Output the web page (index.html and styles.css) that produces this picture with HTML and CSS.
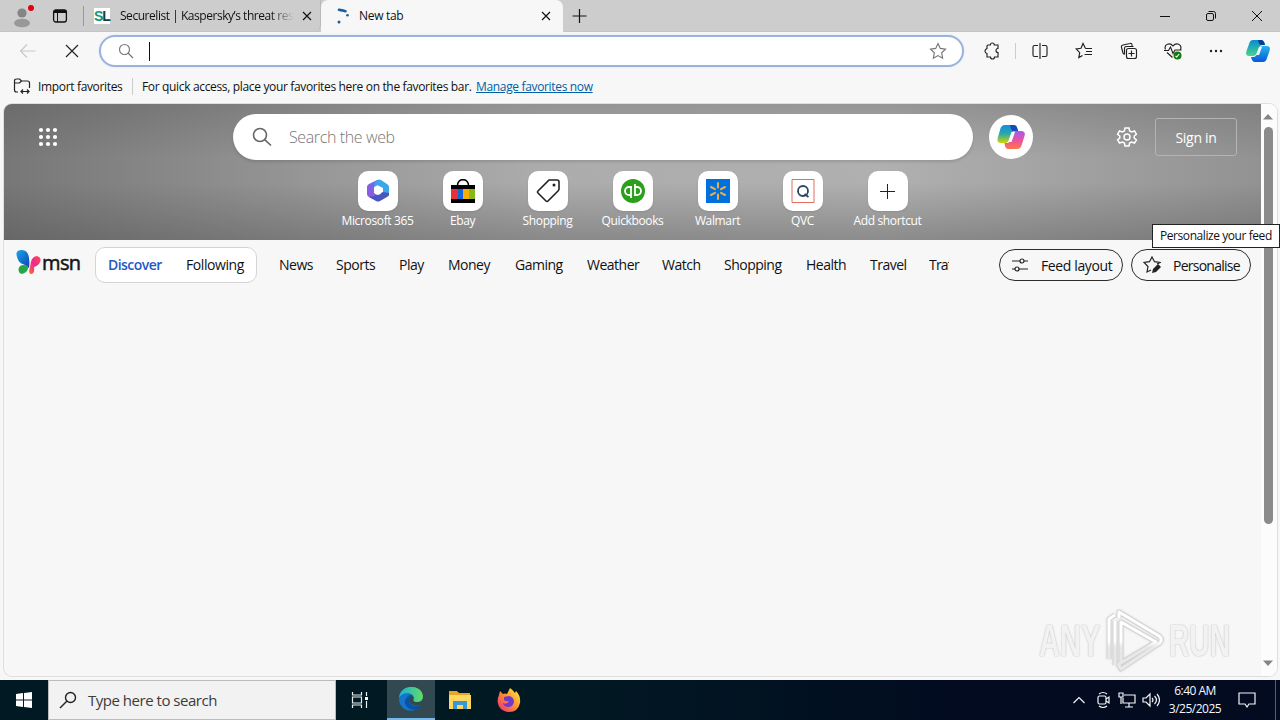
FILE: index.html
```html
<!DOCTYPE html>
<html lang="en">
<head>
<meta charset="utf-8">
<title>New tab</title>
<link rel="stylesheet" href="styles.css">
</head>
<body>
<div class="screen">
  <header class="tabstrip">
    <svg class="profile" width="24" height="26" viewBox="0 0 24 26"><circle cx="12" cy="10" r="4.6" fill="#858585"/><ellipse cx="12" cy="20" rx="8" ry="4.3" fill="#999"/><circle cx="21" cy="5" r="3" fill="#e3000f"/></svg>
    <svg class="workspace" width="16" height="16" viewBox="0 0 16 16"><rect x="1.6" y="2" width="12.8" height="12" rx="2.2" fill="none" stroke="#111" stroke-width="1.3"/><path d="M2 2.500h12v2H2zM5.500 5v9" stroke="#111" fill="#111"/></svg>
    <i class="strip-line"></i>
    <div class="tab">
      <span class="favicon"><b>S</b>L</span>
      <span class="tab-title faded">Securelist | Kaspersky’s threat research</span>
      <svg class="close" width="12" height="12" viewBox="0 0 12 12"><path d="M2 2l8 8M10 2l-8 8"/></svg>
    </div>
    <div class="tab active">
      <svg class="spinner" width="16" height="16" viewBox="0 0 16 16"><path d="M4 1.700L10.500 3.200" fill="none" stroke="#17609c" stroke-width="2.600" stroke-linecap="round" stroke-dasharray="3 1"/><circle cx="12.500" cy="7.200" r="1.300" fill="#17609c"/><circle cx="4" cy="14" r="1.500" fill="#17609c"/></svg>
      <span class="tab-title newtab">New tab</span>
      <svg class="close" width="12" height="12" viewBox="0 0 12 12"><path d="M2 2l8 8M10 2l-8 8"/></svg>
    </div>
    <svg class="plus" width="16" height="16" viewBox="0 0 16 16"><path d="M8.500 1v14M1.500 8h14"/></svg>
    <div class="window-controls">
      <svg width="12" height="12" viewBox="0 0 12 12"><path d="M1 6.500h10"/></svg>
      <svg width="12" height="12" viewBox="0 0 12 12"><rect x="1.500" y="3.500" width="7" height="7" rx="1.500"/><path d="M3.500 1.500h5q2 0 2 2v5"/></svg>
      <svg width="12" height="12" viewBox="0 0 12 12"><path d="M1 1l10 10M11 1L1 11"/></svg>
    </div>
  </header>

  <div class="toolbar">
    <svg class="back" width="18" height="16" viewBox="0 0 18 16"><path d="M16.500 8H2M8 1.500L1.500 8 8 14.500"/></svg>
    <svg class="stop" width="14" height="14" viewBox="0 0 14 14"><path d="M1 1l12 12M13 1L1 13"/></svg>
    <div class="address">
      <svg width="16" height="16" viewBox="0 0 16 16"><circle cx="6.500" cy="6.500" r="5"/><path d="M10 10l5 5"/></svg>
      <i class="caret"></i>
      <svg class="fav-star" width="18" height="18" viewBox="0 0 18 18"><path d="M9 1.500l2.300 4.900 5.200.7-3.800 3.700.9 5.400L9 13.600l-4.600 2.600.9-5.400L1.500 7.100l5.200-.7z"/></svg>
    </div>
    <div class="tools">
      <svg width="18" height="18" viewBox="0 0 18 18"><path d="M5 3h2.300a2 2 0 0 1 4 0H15v3.500a2 2 0 0 0 0 4V15h-3.500a2 2 0 0 1-4 0H4v-3.500a2.400 2.400 0 0 1-1-4.300l1-.7V4q0-1 1-1z"/></svg>
      <i class="tool-line"></i>
      <svg width="18" height="18" viewBox="0 0 18 18"><path d="M7 3.500H3.500Q2 3.500 2 5v8q0 1.500 1.500 1.500H7M11 3.500h3.500Q16 3.500 16 5v8q0 1.500-1.500 1.500H11M9 1v16"/></svg>
      <svg width="18" height="18" viewBox="0 0 18 18"><path d="M10.500 6.500L8 1.500 6 6.300l-4.800.7 3.500 3.600-.9 5L7.500 13.500M10.500 6.500H17M11 9.500h6M9.500 12.500H17"/></svg>
      <svg width="18" height="18" viewBox="0 0 18 18"><rect x="6.500" y="6.500" width="10" height="10" rx="2"/><path d="M11.500 8.500v6M8.500 11.500h6M12 4V3Q12 1 10 1.500L3 3Q1 3.500 1.500 5.500L3 11q.3 1 1.500 1.300M4.500 12.500V6.500q0-2 2-2h7"/></svg>
      <svg width="18" height="18" viewBox="0 0 18 18"><path d="M1.500 7.500C-.5 2 6 .2 9 4c3-3.800 9.500-2 7.500 3.500M0 8.500h4.500L6.500 5 9 11.500 11 8h6.500M3 10.500L8.500 15.500"/><circle cx="13.500" cy="13.500" r="4" fill="#107c10" stroke="none"/><path d="M11.500 14l1.200 1 2.500-3" stroke="#fff"/></svg>
      <svg width="18" height="18" viewBox="0 0 18 18"><g fill="#222" stroke="none"><circle cx="4" cy="9" r="1.200"/><circle cx="9" cy="9" r="1.200"/><circle cx="14" cy="9" r="1.200"/></g></svg>
      <svg class="copilot-bar" width="24" height="24" viewBox="0 0 24 24"><defs><linearGradient id="ca" x1="0" y1="0" x2="0" y2="1"><stop stop-color="#078bd6"/><stop offset="1" stop-color="#4cd48a"/></linearGradient><linearGradient id="cb" x1="0" y1="0" x2="0" y2="1"><stop stop-color="#24b5ed"/><stop offset="1" stop-color="#0758dc"/></linearGradient></defs><path d="M7 1h8q3 0 4 5h-3q-2 0-3 3l-2 5q-1 3-4 3H3q-4 0-2.500-5L3 5q1-4 4-4z" fill="url(#ca)"/><path d="M15 1q3 0 4 5h-4q-2 0-3-5z" fill="#073e91"/><path d="M17 23H9q-3 0-4-5h3q2 0 3-3l2-5q1-3 4-3h4q4 0 2.500 5L21 19q-1 4-4 4z" fill="url(#cb)"/><path d="M13 8h3l-3 8h-3z" fill="#eefaff"/></svg>
    </div>
  </div>

  <div class="favorites">
    <svg width="18" height="16" viewBox="0 0 18 16"><path d="M5 14H3.500Q1.500 14 1.500 12V3Q1.500 1 3.500 1h3l2 2h6q2 0 2 2v5M1.500 5h5l2-2M8 13.500h8M10 11.500l-2 2 2 2M14 11.500l2 2-2 2"/></svg>
    <span class="import">Import favorites</span>
    <i class="fav-line"></i>
    <span class="hint">For quick access, place your favorites here on the favorites bar.</span>
    <a class="manage">Manage favorites now</a>
  </div>

  <main class="page">
    <div class="page-body">
      <section class="hero">
        <div class="hero-top">
          <svg class="waffle" width="20" height="20" viewBox="0 0 20 20"><g fill="#fff"><circle cx="3" cy="3" r="2.100"/><circle cx="10" cy="3" r="2.100"/><circle cx="17" cy="3" r="2.100"/><circle cx="3" cy="10" r="2.100"/><circle cx="10" cy="10" r="2.100"/><circle cx="17" cy="10" r="2.100"/><circle cx="3" cy="17" r="2.100"/><circle cx="10" cy="17" r="2.100"/><circle cx="17" cy="17" r="2.100"/></g></svg>
          <div class="search">
            <svg width="20" height="20" viewBox="0 0 20 20"><circle cx="8" cy="8" r="6.500"/><path d="M12.700 12.700L19 18.500"/></svg>
            <span>Search the web</span>
          </div>
          <div class="copilot">
            <svg width="28" height="26" viewBox="0 0 28 26"><defs><linearGradient id="cc" x1="0" y1="0" x2="0" y2="1"><stop stop-color="#178be4"/><stop offset=".5" stop-color="#29aaa5"/><stop offset="1" stop-color="#d6d500"/></linearGradient><linearGradient id="cd" x1="0" y1="0" x2="0" y2="1"><stop stop-color="#a45aef"/><stop offset=".55" stop-color="#ec5498"/><stop offset="1" stop-color="#ff7846"/></linearGradient></defs><path d="M8 1h9q3 0 4 6h-3q-3 0-4 4l-1.500 4q-1 4-4.500 4H4q-5 0-3-6l2-7q1-5 5-5z" fill="url(#cc)"/><path d="M17 1q3 0 4 6h-5q-2 0-3-6z" fill="#174bb5"/><path d="M20 25h-9q-3 0-3.500-6h3q2 0 3-4l1.500-4q1-4 4-4h5q5 0 3.500 5l-2.500 8q-1 5-5 5z" fill="url(#cd)"/><path d="M14.500 8H18l-3.500 10H11z" fill="#fff"/></svg>
          </div>
          <svg class="gear" width="22" height="22" viewBox="0 0 22 22"><path d="M9 2h4l.6 3 2 1 2.900-1 1.900 3.300L18.200 10v2l2.200 1.800-1.900 3.200-2.900-1-2 1.100-.6 2.900H9l-.6-2.900-2-1.100-2.900 1-1.900-3.200L3.800 12v-2L1.600 8.300 3.500 5l2.900 1 2-1z"/><circle cx="11" cy="11" r="3"/></svg>
          <div class="signin">Sign in</div>
        </div>
        <div class="shortcuts">
          <div class="shortcut"><div class="tile"><svg width="24" height="24" viewBox="0 0 24 24"><defs><linearGradient id="ma" x1="0" y1="1" x2="1" y2="0"><stop stop-color="#9a53dd"/><stop offset="1" stop-color="#527ce8"/></linearGradient></defs><path d="M11 1L3 5Q1 6 1 8v7q0 2 2 3l4 2 5-4-4-2V8l9-5z" fill="url(#ma)"/><path d="M11 1q2-1 4 0l6 4q2 1 2 3v7l-6-1V9l-6-3-3 2 1-5z" fill="#3ba6e8"/><path d="M23 14v2q0 1-2 2l-7 4q-2 1-4 0l-7-4 5-1 9-4z" fill="#4856be"/><circle cx="12" cy="12" r="3.700" fill="#fff"/></svg></div><span>Microsoft 365</span></div>
          <div class="shortcut"><div class="tile"><svg width="24" height="24" viewBox="0 0 24 24"><path d="M6.500 7C6-1.500 18-1.500 17.500 7" fill="none" stroke="#000" stroke-width="1.500"/><path d="M0 6h24v4H0zM0 20h24v4H0z"/><path d="M0 10h7v10H0z" fill="#e53238"/><path d="M7 10h5v10H7z" fill="#1166df"/><path d="M12 10h6v10h-6z" fill="#f5af02"/><path d="M18 10h6v10h-6z" fill="#86b817"/></svg></div><span>Ebay</span></div>
          <div class="shortcut"><div class="tile"><svg width="24" height="24" viewBox="0 0 24 24"><path d="M13.500 1H21q2 0 2 2v7q0 1-1 2L12 22q-1 1-2 0l-8-8q-1-1 0-2L12 2q.5-1 1.500-1z" fill="none" stroke="#222" stroke-width="1.600"/><circle cx="18" cy="6" r="1.500" fill="#222"/></svg></div><span>Shopping</span></div>
          <div class="shortcut"><div class="tile"><svg width="24" height="24" viewBox="0 0 24 24"><circle cx="12" cy="12" r="12" fill="#2ca01c"/><path d="M10 8H8a4 4 0 0 0 0 8h1M10 7v12M14 5v11h2a4 4 0 0 0 0-8h-2" fill="none" stroke="#fff" stroke-width="1.800"/></svg></div><span>Quickbooks</span></div>
          <div class="shortcut"><div class="tile"><svg width="24" height="24" viewBox="0 0 24 24"><path d="M0 0h24v24H0z" fill="#0071dc"/><path d="M12 4v4.500M12 15.500V20M5 8l4 2.200M15 13.800l4 2.200M19 8l-4 2.200M9 13.800L5 16" stroke="#edae46" stroke-width="2" stroke-linecap="round"/></svg></div><span>Walmart</span></div>
          <div class="shortcut"><div class="tile"><svg width="24" height="24" viewBox="0 0 24 24"><path d="M1 .5h22v23H1z" fill="none" stroke="#e36c60"/><circle cx="12" cy="12" r="5" fill="none" stroke="#31455c" stroke-width="1.800"/><path d="M13.500 15l4 3" stroke="#31455c" stroke-width="1.800"/></svg></div><span>QVC</span></div>
          <div class="shortcut"><div class="tile"><svg width="24" height="24" viewBox="0 0 24 24"><path d="M11.500 5v15M4 12.500h15" stroke="#222"/></svg></div><span>Add shortcut</span></div>
        </div>
      </section>
      <nav class="feed">
        <svg class="butterfly" width="26" height="26" viewBox="0 0 26 26"><defs><linearGradient id="ba" x1="0" y1="0" x2="1" y2="1"><stop stop-color="#13a9e8"/><stop offset="1" stop-color="#143eb5"/></linearGradient><linearGradient id="bb" x1="0" y1="1" x2="1" y2="0"><stop stop-color="#ff6b32"/><stop offset=".5" stop-color="#ed2795"/><stop offset="1" stop-color="#ff4c44"/></linearGradient></defs><path d="M13 19Q15 1 6 1-1 1 .8 7 2 14 8 15.500z" fill="url(#ba)"/><path d="M12 17Q4 14 2.500 20q0 6 5 4.500 5-2 4.500-7.500z" fill="#26a747"/><path d="M14 18Q15 7 21 7q6 2 2 8-3 3-5 3 1 7-3 7-3 0-1-7z" fill="url(#bb)"/></svg>
        <span class="msn">msn</span>
        <div class="switch"><b>Discover</b><span>Following</span></div>
        <div class="topics"><span>News</span><span>Sports</span><span>Play</span><span>Money</span><span>Gaming</span><span>Weather</span><span>Watch</span><span>Shopping</span><span>Health</span><span>Travel</span><span class="cut">Traffic</span></div>
        <div class="pill layout"><svg width="18" height="18" viewBox="0 0 18 18"><path d="M1 5h8M13 5h4M1 13h3M8 13h9"/><circle cx="11" cy="5" r="2"/><circle cx="6" cy="13" r="2"/></svg><span>Feed layout</span></div>
        <div class="pill personal"><svg width="18" height="18" viewBox="0 0 18 18"><path d="M14 8l3-1.500-5.500-.8L9 1 6.500 5.700 1 6.500l4 4L4 16l4-2"/><path d="M9 17l1-4 5-5 3 3-5 5z" fill="#222" stroke="none"/></svg><span>Personalise</span></div>
      </nav>
    </div>
    <aside class="scroll">
      <svg width="10" height="6" viewBox="0 0 10 6"><path d="M0 5.500L5 0l5 5.500z" fill="#858585"/></svg>
      <i class="thumb"></i>
      <svg class="down" width="10" height="6" viewBox="0 0 10 6"><path d="M0 .5L5 6l5-5.500z" fill="#858585"/></svg>
    </aside>
  </main>

  <footer class="taskbar">
    <div class="start"><svg width="16" height="16" viewBox="0 0 16 16"><path d="M0 2l7-1v6.500H0zM8 1l8-1v7.500H8zM0 8.500h7V15l-7-1zM8 8.500h8V16l-8-1z" fill="#fff"/></svg></div>
    <div class="task-search"><svg width="18" height="18" viewBox="0 0 18 18"><circle cx="11.500" cy="6.500" r="5"/><path d="M8 10l-7 7"/></svg><span>Type here to search</span></div>
    <div class="app view"><svg width="18" height="16" viewBox="0 0 18 16"><path d="M1.500 0v3h9V0M1.500 16v-3h9v3M1.500 5h9v6h-9zM15.500 0v4M15.500 9v7" fill="none" stroke="#e9eeee" stroke-width="1.200"/><path d="M14 5h3v3h-3z" fill="#fff"/></svg></div>
    <div class="app selected"><svg width="24" height="24" viewBox="0 0 24 24"><defs><linearGradient id="ea" x1="0" y1="0" x2="1" y2="0"><stop stop-color="#19afd9"/><stop offset="1" stop-color="#63dc64"/></linearGradient></defs><path d="M0 11C1-4 23-3 24 9q0 6-6 6-5 0-3-4-2-6-9-4-5 2-6 4z" fill="url(#ea)"/><path d="M0 12C1 6 10 4 14 9q-4 0-4 4 0 7 12 5c-7 11-22 5-22-6z" fill="#1376cb"/><path d="M9 9Q3 15 8 20q3 3 8 3 4-1 6-5-12 3-12-5 0-3 4-4-2-2-5 0z" fill="#0753a5"/></svg></div>
    <div class="app"><svg width="24" height="22" viewBox="0 0 24 22"><path d="M1 2h8l2 2h11v16H1z" fill="#e6a727"/><path d="M1 6h22v14H1z" fill="#ffd75e"/><path d="M5 12h14v8h-4v-4H9v4H5z" fill="#3797d8"/></svg></div>
    <div class="app"><svg width="24" height="24" viewBox="0 0 24 24"><defs><linearGradient id="fa" x1="1" y1="0" x2="0" y2="1"><stop stop-color="#fff143"/><stop offset=".45" stop-color="#ff982f"/><stop offset="1" stop-color="#ed237c"/></linearGradient></defs><path d="M3 3l3 3q2-1 4 0l3-6q3 2 5 5l1-2q5 5 4 12-2 9-11 9C3 24-2 15 2 7z" fill="url(#fa)"/><path d="M7 9l5-1q5 1 5 6-1 5-6 5-5-1-5-4 4 2 6-2-3 1-5-1z" fill="#713bc8"/></svg></div>
    <div class="tray">
      <svg width="12" height="8" viewBox="0 0 12 8"><path d="M.5 7L6 1.500 11.500 7"/></svg>
      <svg width="14" height="18" viewBox="0 0 14 18"><rect x="1" y="5" width="8" height="8" rx="1.500"/><path d="M9 8l3-2v6l-3-2M2 3q4-3 8 0M2 15q4 3 8 0"/></svg>
      <svg width="18" height="16" viewBox="0 0 18 16"><path d="M6 3h11v8H5V6M1 1h4v4H1zM3 5v7M11 11v4M7 15h8"/></svg>
      <svg width="18" height="16" viewBox="0 0 18 16"><path d="M1 6h3l4-4v12l-4-4H1zM10 6q2 2 0 4M12.500 4q4 4 0 8M15 2q5 6 0 12"/></svg>
      <div class="clock"><span>6:40 AM</span><span>3/25/2025</span></div>
      <svg class="notice" width="18" height="18" viewBox="0 0 18 18"><path d="M1 2h16v11h-6l-2 3-2-3H1z"/></svg>
      <i class="desktop-line"></i>
    </div>
  </footer>

  <div class="tooltip">Personalize your feed</div>
  <div class="watermark"><span>ANY</span><svg width="60" height="64" viewBox="0 0 60 64"><g fill="none" stroke-linejoin="round"><path d="M4 50V10L10 6M10 56V12M16 54V13l35 20-37 22M14 9V3l40 24q4 3 1 7L16 60l-3-5" stroke="#d2d2d2" stroke-width="5"/><path d="M4 50V10L10 6M10 56V12M16 54V13l35 20-37 22M14 9V3l40 24q4 3 1 7L16 60l-3-5" stroke="url(#wm)" stroke-width="3"/></g><defs><linearGradient id="wm" gradientUnits="userSpaceOnUse" x1="0" y1="0" x2="0" y2="64"><stop offset=".5" stop-color="#fff"/><stop offset=".6" stop-color="#e8e8e8"/></linearGradient></defs></svg><span class="run">RUN</span></div>
</div>
</body>
</html>
```
FILE: styles.css
```css
* { box-sizing: border-box; }
body { margin: 0; font-family: "Open Sans", "Noto Sans", sans-serif; font-size: 12px; color: #111; }
svg { display: block; flex: none; }
i { display: block; flex: none; }
span { white-space: nowrap; }
.screen { position: relative; width: 1280px; height: 720px; overflow: hidden; display: flex; flex-direction: column; background: #f7f7f7; }
.tabstrip { height: 32px; background: #cdcdcd; display: flex; align-items: center; border-bottom: 1px solid #c5c5c5; }
.profile { margin-left: 10px; }
.workspace { margin-left: 18px; }
.strip-line { width: 1px; height: 20px; margin-left: 15px; background: #999; }
.tab { width: 237px; height: 31px; display: flex; align-items: center; padding-left: 10px; border-right: 1px solid #b9b9b9; border-radius: 0 0 6px 0; }
.tab.active { width: 242px; height: 32px; background: #f7f7f7; border: 0; border-radius: 7px 7px 0 0; padding-left: 14px; margin-bottom: -1px; }
.favicon { width: 16px; height: 16px; background: #fff; font: bold 14px/17px "Liberation Sans", sans-serif; letter-spacing: -1px; color: #173c3c; }
.favicon b { color: #139575; }
.tab-title { margin-left: 10px; width: 174px; overflow: hidden; font-size: 12px; letter-spacing: -.46px; }
.faded { -webkit-mask-image: linear-gradient(90deg, #000 150px, transparent 174px); mask-image: linear-gradient(90deg, #000 150px, transparent 174px); }
.newtab { margin-left: 8px; width: 175px; letter-spacing: -.3px; margin-top: -1px; }
.close { margin-left: 7px; stroke: #111; stroke-width: 1.2; }
.active .close { margin-left: 6px; }
.plus { margin-left: 8px; stroke: #111; stroke-width: 1.2; }
.window-controls { margin-left: auto; padding-right: 17px; display: flex; gap: 34px; }
.window-controls svg { fill: none; stroke: #111; stroke-width: 1; }
.toolbar { height: 38px; display: flex; align-items: center; }
.toolbar svg { fill: none; stroke: #222; stroke-width: 1.15; }
.toolbar .back { margin-left: 19px; stroke: #c8c8c8; }
.toolbar .stop { margin-left: 28px; }
.address { width: 865px; height: 32px; margin-left: 20px; display: flex; align-items: center; background: #fff; border: 2px solid #9bb2dd; border-radius: 16px; padding-left: 17px; box-shadow: 0 0 2px #cfe0f5; }
.toolbar .address svg { stroke: #757575; }
.caret { width: 1px; height: 19px; margin-left: 15px; background: #111; }
.address .fav-star { margin-left: auto; margin-right: 15px; }
.tools { display: grid; grid-template-columns: 32px 16px 44px 45px 44px 43px 39px 24px; align-items: center; margin-left: 19px; }
.tool-line { width: 1px; height: 16px; background: #ccc; }
.toolbar .copilot-bar { stroke: none; }
.favorites { height: 33px; display: flex; align-items: center; padding: 0 0 1px 13px; letter-spacing: -.34px; }
.favorites svg { fill: none; stroke: #222; stroke-width: 1.2; }
.import { width: 84px; margin-left: 7px; }
.fav-line { width: 1px; height: 17px; background: #ccc; margin-left: 10px; }
.hint { width: 329px; margin-left: 9px; }
.manage { color: #005fa6; text-decoration: underline; margin-left: 5px; white-space: nowrap; }
.page { width: 1273px; height: 572px; margin: 1px 0 0 4px; border-radius: 8px; overflow: hidden; display: flex; background: #f7f7f7; box-shadow: 0 0 0 1px #dedede; }
.page-body { width: 1257px; }
.hero { height: 136px; background: linear-gradient(0deg, rgba(70,70,70,.34), transparent 42%, transparent 60%, rgba(70,70,70,.24)), linear-gradient(90deg, #777 0, #969696 24%, #acacac 43%, #b0b0b0 70%, #929292 100%); }
.hero-top { height: 66px; display: flex; align-items: center; padding-left: 34px; }
.search { width: 740px; height: 46px; margin-left: 175px; display: flex; align-items: center; background: #fff; border-radius: 23px; padding-left: 19px; box-shadow: 0 2px 3px rgba(0,0,0,.13); }
.search svg { fill: none; stroke: #666; stroke-width: 1.6; }
.search span { color: #777; font-size: 16px; font-weight: 300; letter-spacing: -.38px; margin-left: 17px; }
.copilot { width: 44px; height: 44px; margin-left: 16px; border-radius: 50%; background: #fff; display: grid; place-items: center; }
.gear { margin-left: 83px; fill: none; stroke: #fff; stroke-width: 1.5; }
.signin { width: 82px; height: 38px; margin-left: 17px; border: 1px solid #b4b4b4; border-radius: 3px; color: #fff; display: grid; place-items: center; font-size: 14px; letter-spacing: -.3px; }
.shortcuts { display: grid; grid-template-columns: repeat(7, 85px); padding: 1px 0 0 331px; }
.shortcut { display: flex; flex-direction: column; align-items: center; color: #fff; line-height: 18px; }
.tile { width: 40px; height: 40px; display: grid; place-items: center; background: #fff; border-radius: 10px; box-shadow: 0 1px 2px rgba(0,0,0,.1); }
.shortcut span { font-size: 12px; letter-spacing: -.36px; margin-top: 1px; }
.feed { height: 50px; display: flex; align-items: center; padding-left: 12px; font-size: 14px; letter-spacing: -.5px; }
.msn { width: 39px; font: 20px/28px "Open Sans", sans-serif; letter-spacing: -.6px; -webkit-text-stroke: .55px #222; margin-top: -4px; }
.butterfly { margin-top: -6px; }
.switch { width: 162px; height: 36px; margin-left: 14px; display: flex; align-items: center; background: #fff; border: 1px solid #d4d4d4; border-radius: 10px; padding: 0 0 2px 12px; }
.switch b { width: 78px; color: #2358c7; font-weight: 600; letter-spacing: -.55px; }
.switch span { letter-spacing: -.42px; }
.topics { margin: -2px 0 0 22px; display: grid; grid-template-columns: 57px 63px 49px 67px 72px 75px 62px 82px 64px 59px 20px; }
.cut { overflow: hidden; letter-spacing: -.8px; }
.pill { height: 32px; border: 1px solid #2c2c2c; border-radius: 16px; display: flex; align-items: center; padding-left: 11px; }
.pill svg { fill: none; stroke: #222; stroke-width: 1.2; }
.pill span { margin-left: 12px; }
.layout { width: 124px; margin-left: 50px; letter-spacing: -.38px; }
.personal { width: 120px; margin-left: 8px; letter-spacing: -.75px; }
.scroll { width: 16px; display: flex; flex-direction: column; align-items: center; padding: 10px 2px 10px 0; background: #fcfcfc; }
.thumb { width: 9px; height: 397px; margin-top: 7px; background: #8b8b8b; border-radius: 5px; }
.down { margin-top: auto; }
.taskbar { height: 40px; margin-top: 4px; background: linear-gradient(90deg, #011923 0, #011923 45%, #020b20 75%, #020b20 100%); display: flex; }
.start, .app { width: 48px; height: 40px; display: grid; place-items: center; }
.app { width: 49px; }
.app.view { width: 51px; padding-right: 3px; }
.task-search { width: 288px; background: #f2f2f2; border: 1px solid #bbb; display: flex; align-items: center; padding-left: 10px; color: #3c3c3c; font-size: 15px; letter-spacing: -.48px; }
.task-search svg { fill: none; stroke: #222; stroke-width: 1.4; }
.task-search span { margin-left: 11px; }
.app.selected { width: 48px; background: #334951; border-bottom: 2px solid #76b9ed; }
.tray { margin-left: auto; display: flex; align-items: center; color: #f6f7fa; }
.tray svg { fill: none; stroke: #f4f5f8; stroke-width: 1.2; margin-right: 12px; }
.tray svg:nth-child(2) { margin-right: 7px; }
.tray svg:nth-child(3) { margin-right: 6px; }
.tray svg:nth-child(4) { margin-right: 7px; }
.clock { width: 56px; display: flex; flex-direction: column; align-items: center; line-height: 18px; font-size: 12px; letter-spacing: -.5px; }
.tray .notice { margin-left: 15px; margin-right: 19px; }
.desktop-line { width: 1px; height: 40px; background: #526070; margin-right: 4px; }
.tooltip { position: absolute; left: 1152px; top: 224px; width: 128px; height: 24px; border: 1px solid #222; background: #fff; line-height: 21px; padding-left: 7px; font-size: 12px; letter-spacing: -.43px; white-space: nowrap; }
.watermark { position: absolute; left: 1039px; top: 609px; display: flex; align-items: center; color: #f2f2f2; font: bold 44px "Liberation Sans", sans-serif; text-shadow: 0 0 2px #aaa; }
.watermark span { width: 66px; transform: scaleX(.66); transform-origin: left; }
.watermark .run { margin-left: 4px; transform: scaleX(.64); }
.watermark svg { filter: drop-shadow(0 0 1px #ddd); }
```
